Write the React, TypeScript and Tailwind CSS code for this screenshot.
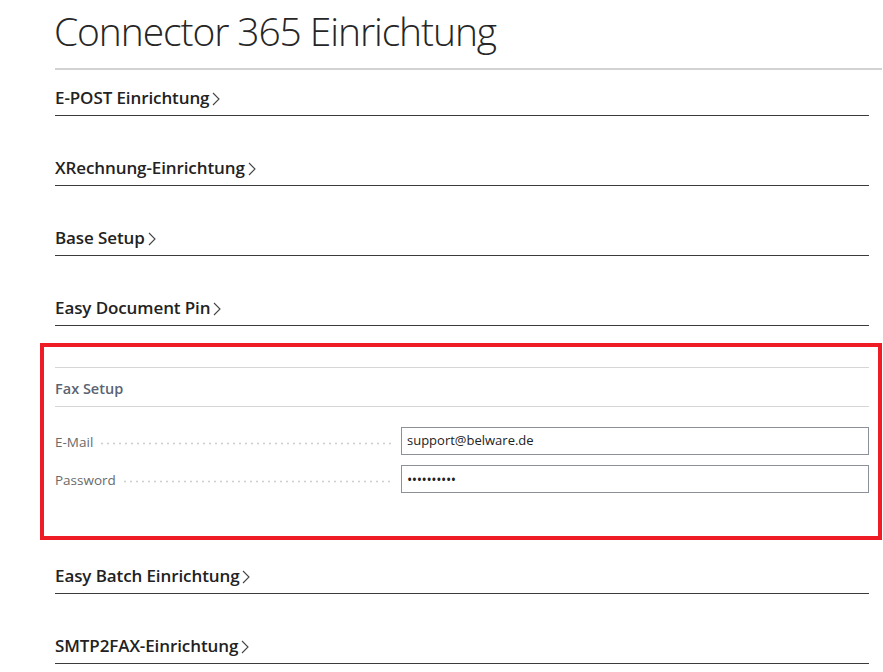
import React from "react";

const sections = [
  "E-POST Einrichtung",
  "XRechnung-Einrichtung",
  "Base Setup",
  "Easy Document Pin",
];

const sectionsAfter = ["Easy Batch Einrichtung", "SMTP2FAX-Einrichtung"];

function Chevron() {
  return (
    <svg width="8" height="14" viewBox="0 0 8 14" className="ml-[3px] mt-[2px]">
      <polyline points="1,1 7,7 1,13" fill="none" stroke="#444" strokeWidth="1.1" />
    </svg>
  );
}

function SectionHeader({ title, height }: { title: string; height: string }) {
  return (
    <div
      className={
        "mr-[13px] ml-[15px] flex items-end border-b border-[#3b3b3b] pb-[5px] " + height
      }
    >
      <div className="flex h-[24px] items-center text-[17px] font-semibold leading-[24px] tracking-[-0.1px] text-[#222]">
        <span>{title}</span>
        <Chevron />
      </div>
    </div>
  );
}

function Field({ label, children }: { label: string; children: React.ReactNode }) {
  return (
    <div className="grid grid-cols-[346px_1fr] items-center">
      <div className="mt-[2px] flex items-center pr-2">
        <span className="text-[13.5px] text-[#6a6a6a]">{label}</span>
        <span className="ml-[6px] mt-[3px] h-[3px] flex-1 bg-[radial-gradient(circle,_#cfcfcf_0.9px,_transparent_1.2px)] bg-[length:6px_3px] bg-repeat-x" />
      </div>
      <div className="flex h-[28px] items-center border border-[#8b9099] px-[5px] text-[13px] text-[#222]">
        {children}
      </div>
    </div>
  );
}

export default function App() {
  return (
    <div
      className="h-[672px] w-[883px] overflow-hidden bg-white pl-[40px] pr-px"
      style={{ fontFamily: '"Open Sans", "Noto Sans", sans-serif' }}
    >
      <h1 className="pl-[14px] pt-[3px] text-[39px] font-light leading-[56px] tracking-[-1.1px] text-[#262626]">
        Connector 365 Einrichtung
      </h1>
      <div className="ml-[15px] mt-[9px] h-[2px] bg-[#d2d2d2]" />

      {sections.map((s, i) => (
        <SectionHeader key={s} title={s} height={i === 0 ? "h-[46px]" : "h-[70px]"} />
      ))}

      <div className="mt-[17px] h-[197px] border-[4px] border-[#ee1c25] pl-[11px] pr-[9px] pt-[20px]">
        <div className="h-px bg-[#d6d6d6]" />
        <div className="flex h-[38px] items-center pt-[3px] text-[14.5px] font-semibold text-[#5b6472]">
          Fax Setup
        </div>
        <div className="h-px bg-[#d6d6d6]" />
        <div className="mt-[20px] flex flex-col gap-[10px]">
          <Field label="E-Mail">support@belware.de</Field>
          <Field label="Password">
            <span className="text-[14px] tracking-[-0.4px] text-[#222]">••••••••••</span>
          </Field>
        </div>
      </div>

      {sectionsAfter.map((s, i) => (
        <SectionHeader key={s} title={s} height={i === 0 ? "h-[54px]" : "h-[70px]"} />
      ))}
    </div>
  );
}
